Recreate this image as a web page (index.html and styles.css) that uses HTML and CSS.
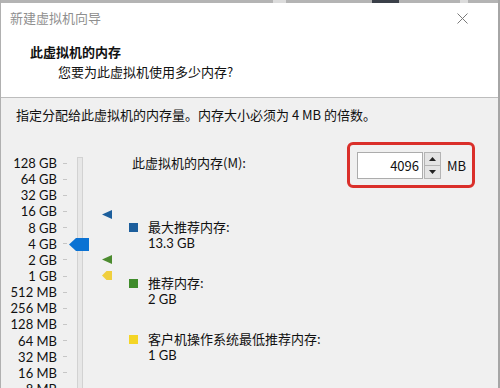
FILE: index.html
```html
<!DOCTYPE html>
<html lang="zh-CN">
<head>
  <meta charset="UTF-8" />
  <meta name="viewport" content="width=device-width, initial-scale=1.0" />
  <title>新建虚拟机向导</title>
  <link rel="stylesheet" href="styles.css">
</head>
<body>
  <div class="window">
    <div class="frame-top">
      <span class="frame-mark mark-a"></span>
      <span class="frame-mark mark-b"></span>
      <span class="frame-mark mark-c"></span>
    </div>
    <header class="head">
      <div class="titlebar">
        <span class="title">新建虚拟机向导</span>
        <svg class="close" width="11" height="11" viewBox="0 0 11 11">
          <path d="M0.5 0.5 L10.5 10.5 M10.5 0.5 L0.5 10.5" stroke="#7a7a7a" stroke-width="1" fill="none" />
        </svg>
      </div>
      <h1>此虚拟机的内存</h1>
      <p class="sub">您要为此虚拟机使用多少内存?</p>
    </header>
    <main class="content">
      <p class="intro">指定分配给此虚拟机的内存量。内存大小必须为 4 MB 的倍数。</p>
      <div class="memory">
        <div class="scale">
          <ul class="scale-labels">
            <li><span>128 GB</span><i></i></li>
            <li><span>64 GB</span><i></i></li>
            <li><span>32 GB</span><i></i></li>
            <li><span>16 GB</span><i></i></li>
            <li><span>8 GB</span><i></i></li>
            <li><span>4 GB</span><i></i></li>
            <li><span>2 GB</span><i></i></li>
            <li><span>1 GB</span><i></i></li>
            <li><span>512 MB</span><i></i></li>
            <li><span>256 MB</span><i></i></li>
            <li><span>128 MB</span><i></i></li>
            <li><span>64 MB</span><i></i></li>
            <li><span>32 MB</span><i></i></li>
            <li><span>16 MB</span><i></i></li>
            <li><span>8 MB</span><i></i></li>
          </ul>
          <div class="track"></div>
          <span class="thumb"></span>
          <span class="marker marker-max"></span>
          <span class="marker marker-rec"></span>
          <span class="marker marker-min"></span>
        </div>
        <div class="settings">
          <div class="mem-row">
            <label class="mem-label" for="memSize">此虚拟机的内存(M):</label>
            <div class="highlight">
              <input class="mem-input" id="memSize" type="text" value="4096" />
              <div class="spinner">
                <span class="spin-btn"><svg width="7" height="4" viewBox="0 0 7 4"><path d="M3.5 0 L7 4 L0 4 Z" fill="#222" /></svg></span>
                <span class="spin-btn"><svg width="7" height="4" viewBox="0 0 7 4"><path d="M0 0 L7 0 L3.5 4 Z" fill="#222" /></svg></span>
              </div>
              <span class="unit">MB</span>
            </div>
          </div>
          <div class="legend">
            <div class="legend-item">
              <span class="swatch swatch-max"></span>
              <div class="legend-text">
                <p>最大推荐内存:</p>
                <p class="legend-value">13.3 GB</p>
              </div>
            </div>
            <div class="legend-item">
              <span class="swatch swatch-rec"></span>
              <div class="legend-text">
                <p>推荐内存:</p>
                <p class="legend-value">2 GB</p>
              </div>
            </div>
            <div class="legend-item">
              <span class="swatch swatch-min"></span>
              <div class="legend-text">
                <p>客户机操作系统最低推荐内存:</p>
                <p class="legend-value">1 GB</p>
              </div>
            </div>
          </div>
        </div>
      </div>
    </main>
  </div>
</body>
</html>
```

FILE: styles.css
```css
html, body {
  margin: 0;
  padding: 0;
}
body {
  width: 500px;
  height: 388px;
  overflow: hidden;
  font-family: "Noto Sans CJK SC", "Noto Sans", sans-serif;
  font-size: 13px;
  color: #111;
  background-color: #f0f0f0;
}
p {
  margin: 0;
}
.window {
  height: 388px;
  border-left: 1px solid #b0b0b0;
  border-right: 2px solid #a6a6a6;
  background-color: #f0f0f0;
  overflow: hidden;
}
.frame-top {
  height: 3px;
  background-color: #b4b4b4;
  display: flex;
}
.frame-mark {
  height: 3px;
}
.mark-a {
  width: 13px;
  margin-left: 272px;
  background-color: #dcdcdc;
}
.mark-b {
  width: 27px;
  margin-left: 86px;
  background-color: #3b4049;
}
.mark-c {
  width: 8px;
  margin-left: 61px;
  background-color: #dcdcdc;
}
.head {
  height: 94px;
  background-color: #fff;
  border-bottom: 1px solid #bdbdbd;
}
.titlebar {
  height: 30px;
  display: flex;
  align-items: center;
  justify-content: space-between;
  padding: 0 30px 0 9px;
}
.title {
  color: #8f8f8f;
  line-height: 30px;
}
.head h1 {
  margin: 10px 0 0 29px;
  font-size: 13px;
  font-weight: bold;
  line-height: 18px;
}
.sub {
  margin: 2px 0 0 57px;
  line-height: 18px;
}
.content {
  padding: 8px 0 0 0;
}
.intro {
  padding-left: 15px;
  line-height: 18px;
}
.memory {
  display: flex;
  margin-top: 18px;
}
.scale {
  position: relative;
  width: 128px;
  flex-shrink: 0;
  height: 260px;
}
.scale-labels {
  list-style: none;
  margin: 0;
  padding: 13px 0 0 0;
  font-family: Lato, "Noto Sans", sans-serif;
}
.scale-labels li {
  display: flex;
  align-items: center;
  height: 16.15px;
  line-height: 16.15px;
}
.scale-labels span {
  width: 56px;
  text-align: right;
  white-space: nowrap;
}
.scale-labels i {
  width: 4px;
  height: 1px;
  margin-left: 6px;
  background-color: #c6c6c6;
}
.track {
  position: absolute;
  left: 76px;
  top: 15px;
  bottom: 0;
  width: 4px;
  background-color: #e7e7e7;
  border: 1px solid #d2d2d2;
}
.thumb {
  position: absolute;
  left: 68px;
  top: 96px;
  width: 20px;
  height: 13px;
  background-color: #0b72d3;
  clip-path: polygon(0 50%, 35% 0, 100% 0, 100% 100%, 35% 100%);
}
.marker {
  position: absolute;
  left: 101px;
  width: 10px;
  height: 9px;
  clip-path: polygon(0 50%, 100% 0, 100% 100%);
}
.marker-max {
  top: 68px;
  background-color: #1c5e9c;
}
.marker-rec {
  top: 113px;
  background-color: #4c8b2f;
}
.marker-min {
  top: 129px;
  background-color: #f0cf3e;
  clip-path: polygon(0 50%, 45% 0, 100% 0, 100% 100%, 45% 100%);
  border-radius: 4px 0 0 4px;
}
.settings {
  flex: 1;
  padding-right: 23px;
}
.mem-row {
  display: flex;
  align-items: flex-start;
}
.mem-label {
  margin: 13px 0 0 3px;
  line-height: 16px;
}
.highlight {
  margin-left: auto;
  width: 115px;
  height: 40px;
  border: 3px solid #da2f2a;
  border-radius: 6px;
  display: flex;
  align-items: center;
  padding-left: 7px;
}
.mem-input {
  width: 66px;
  height: 27px;
  box-sizing: border-box;
  border: 1px solid #acacac;
  background-color: #fff;
  text-align: right;
  padding: 0 3px 0 0;
  font-family: "Noto Sans CJK SC", "Noto Sans", sans-serif;
  font-size: 13px;
  color: #111;
  outline: none;
}
.spinner {
  display: flex;
  flex-direction: column;
  width: 17px;
  height: 27px;
  margin-left: 1px;
}
.spin-btn {
  flex: 1;
  display: flex;
  align-items: center;
  justify-content: center;
  background-color: #e4e4e4;
  border: 1px solid #b4b4b4;
}
.spin-btn + .spin-btn {
  border-top: none;
}
.unit {
  margin-left: 6px;
}
.legend {
  margin-top: 29.5px;
  display: flex;
  flex-direction: column;
  gap: 21.5px;
}
.legend-item {
  display: flex;
  align-items: flex-start;
}
.swatch {
  width: 9px;
  height: 9px;
  margin-top: 5.5px;
  flex-shrink: 0;
}
.swatch-max {
  background-color: #1c5e9c;
}
.swatch-rec {
  background-color: #3f8c2b;
}
.swatch-min {
  background-color: #f4d526;
}
.legend-text {
  margin-left: 10px;
  line-height: 17px;
}
.legend-value {
  margin-top: 0.5px;
  font-family: Lato, "Noto Sans", sans-serif;
}
```
